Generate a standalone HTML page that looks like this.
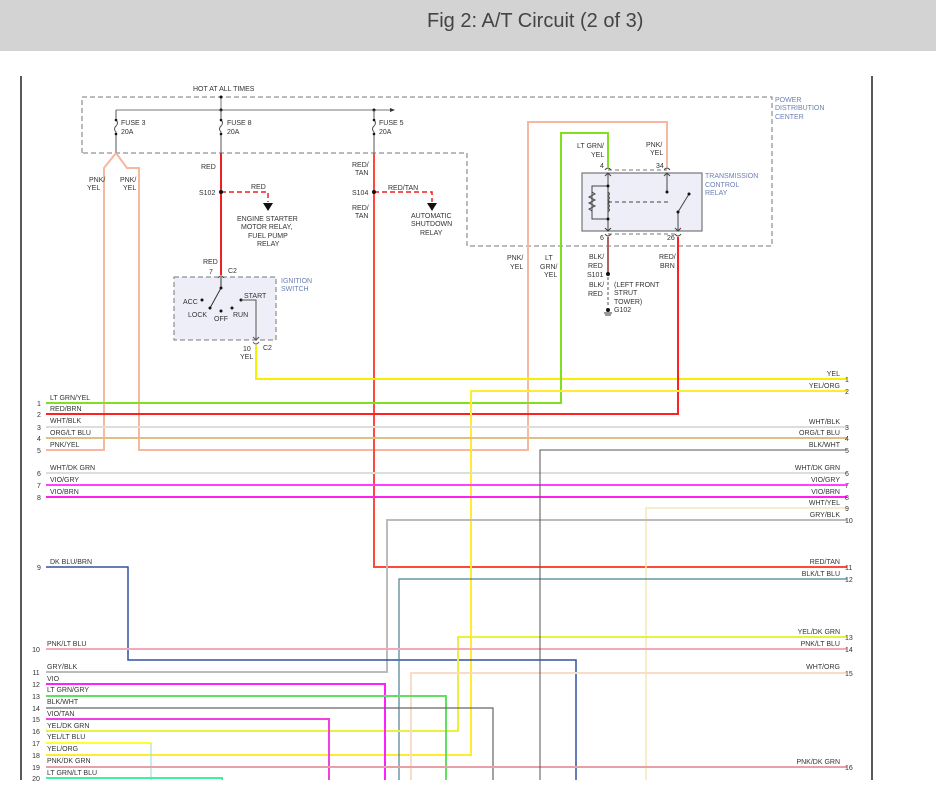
<!DOCTYPE html>
<html><head><meta charset="utf-8"><style>
html,body{margin:0;padding:0;background:#fff;width:936px;height:806px;overflow:hidden}
.hdr{position:absolute;left:0;top:0;width:936px;height:51px;background:#d3d3d3}
.hdr span{position:absolute;left:427px;top:10px;font:20px "Liberation Sans",sans-serif;color:#444}
svg{position:absolute;left:0;top:0}
text{font-family:"Liberation Sans",sans-serif;font-size:7px;fill:#333}
.b{fill:#6a7fb5}
</style></head><body>
<div class="hdr"><span>Fig 2: A/T Circuit (2 of 3)</span></div>
<svg width="936" height="806" viewBox="0 0 936 806">
<line x1="21" y1="76" x2="21" y2="780" stroke="#222" stroke-width="1.5"/>
<line x1="872" y1="76" x2="872" y2="780" stroke="#222" stroke-width="1.5"/>
<path d="M82,153 V97 H772 V246 H467 V153 H82" fill="none" stroke="#777" stroke-width="1" stroke-dasharray="5,3"/>
<text x="193" y="91">HOT AT ALL TIMES</text>
<text class="b" x="775" y="102">POWER</text><text class="b" x="775" y="110">DISTRIBUTION</text><text class="b" x="775" y="119">CENTER</text>
<line x1="221" y1="97" x2="221" y2="110" stroke="#777"/>
<line x1="116" y1="110" x2="390" y2="110" stroke="#777"/>
<path d="M390,108 L395,110 L390,112Z" fill="#333"/>
<g fill="#111"><circle cx="221" cy="97" r="1.5"/><circle cx="221" cy="110" r="1.5"/><circle cx="374" cy="110" r="1.5"/></g>
<g stroke="#555" fill="none">
<path d="M116,110 V120 q3,3 0,6 q-3,3 0,6 V153"/>
<path d="M221,110 V120 q3,3 0,6 q-3,3 0,6 V153"/>
<path d="M374,110 V120 q3,3 0,6 q-3,3 0,6 V153"/>
</g>
<g fill="#111"><circle cx="116" cy="120" r="1.3"/><circle cx="116" cy="134" r="1.3"/><circle cx="221" cy="120" r="1.3"/><circle cx="221" cy="134" r="1.3"/><circle cx="374" cy="120" r="1.3"/><circle cx="374" cy="134" r="1.3"/></g>
<text x="121" y="125">FUSE 3</text><text x="121" y="134">20A</text>
<text x="227" y="125">FUSE 8</text><text x="227" y="134">20A</text>
<text x="379" y="125">FUSE 5</text><text x="379" y="134">20A</text>
<g fill="none" stroke-width="2">
<path d="M116,153 L104,168 V450 H46" stroke="#f8b8a0"/>
<path d="M116,153 L127,168 H139 V450 H528 V122 H667 V167" stroke="#f8b8a0"/>
<path d="M221,153 V275" stroke="#ee2020"/>
<path d="M374,153 V567 H847" stroke="#ff4a3a"/>
<path d="M256,345 V379 H847" stroke="#f4f000"/>
<path d="M608,167 V133 H561 V403 H46" stroke="#80e020"/>
<path d="M678,237 V414 H46" stroke="#ff2020"/>
<path d="M608,237 V274" stroke="#b06060"/>
<path d="M847,391 H471 V755 H46" stroke="#ffec30"/>
<path d="M46,427 H847" stroke="#dddddd"/>
<path d="M46,438 H847" stroke="#e0c080"/>
<path d="M46,473 H847" stroke="#d8e0d8"/>
<path d="M46,485 H847" stroke="#ff40ff"/>
<path d="M46,497 H847" stroke="#ff20f0"/>
<path d="M847,508 H646 V780" stroke="#f0e8b8" stroke-width="1.5"/>
<path d="M847,520 H387 V672 H46" stroke="#bbbbbb"/>
<path d="M46,567 H128 V660 H576 V780" stroke="#3050a0" stroke-width="1.5"/>
<path d="M847,579 H399 V780" stroke="#4a8090" stroke-width="1.2"/>
<path d="M847,637 H458 V731 H46" stroke="#e8f040"/>
<path d="M46,649 H847" stroke="#f4a8b8"/>
<path d="M847,673 H411 V780" stroke="#f8dcc8"/>
<path d="M46,684 H385 V780" stroke="#ff20ff"/>
<path d="M46,696 H446 V780" stroke="#60e060"/>
<path d="M46,708 H493 V780" stroke="#666" stroke-width="1.2"/>
<path d="M46,719 H329 V780" stroke="#f040e0"/>
<path d="M46,743 H151" stroke="#ffff30"/>
<path d="M151,743 V780" stroke="#a0e0e0" stroke-width="1.2"/>
<path d="M46,767 H847" stroke="#e8a0a8"/>
<path d="M46,778 H222 V780" stroke="#40f0a0"/>
<path d="M847,450 H540 V780" stroke="#555" stroke-width="1"/>
</g>
<g fill="none" stroke="#ee2020" stroke-width="1.5" stroke-dasharray="5,3">
<path d="M221,192 H268 V202"/><path d="M374,192 H432 V202"/>
</g>
<path d="M263,203 H273 L268,211Z" fill="#111"/><path d="M427,203 H437 L432,211Z" fill="#111"/>
<g fill="#111"><circle cx="221" cy="192" r="2"/><circle cx="374" cy="192" r="2"/><circle cx="608" cy="274" r="2"/></g>
<text x="201" y="169">RED</text><text x="199" y="195">S102</text><text x="251" y="189">RED</text>
<text x="237" y="221">ENGINE STARTER</text><text x="241" y="229">MOTOR RELAY,</text><text x="248" y="238">FUEL PUMP</text><text x="257" y="246">RELAY</text>
<text x="352" y="167">RED/</text><text x="355" y="175">TAN</text><text x="352" y="195">S104</text><text x="388" y="190">RED/TAN</text>
<text x="352" y="210">RED/</text><text x="355" y="218">TAN</text>
<text x="411" y="218">AUTOMATIC</text><text x="411" y="226">SHUTDOWN</text><text x="420" y="235">RELAY</text>
<text x="89" y="182">PNK/</text><text x="87" y="190">YEL</text><text x="120" y="182">PNK/</text><text x="123" y="190">YEL</text>
<rect x="174" y="277" width="102" height="63" fill="#eeeef8" stroke="#777" stroke-dasharray="5,3"/>
<text x="203" y="264">RED</text><text x="209" y="274">7</text><text x="228" y="273">C2</text>
<text class="b" x="281" y="283">IGNITION</text><text class="b" x="281" y="291">SWITCH</text>
<path d="M218,278 q3,-4 6,0" fill="none" stroke="#555"/>
<path d="M221,277 V288 L210,308" stroke="#333" fill="none"/>
<g fill="#111"><circle cx="221" cy="288" r="1.5"/><circle cx="202" cy="300" r="1.5"/><circle cx="210" cy="308" r="1.5"/><circle cx="221" cy="311" r="1.5"/><circle cx="232" cy="308" r="1.5"/><circle cx="241" cy="300" r="1.5"/></g>
<path d="M241,300 H256 V340" stroke="#555" fill="none"/>
<path d="M253,337 L256,340 L259,337" stroke="#555" fill="none"/>
<path d="M253,342 q3,4 6,0" fill="none" stroke="#555"/>
<text x="183" y="304">ACC</text><text x="188" y="317">LOCK</text><text x="214" y="321">OFF</text><text x="233" y="317">RUN</text><text x="244" y="298">START</text>
<text x="243" y="351">10</text><text x="263" y="350">C2</text><text x="240" y="359">YEL</text>
<path d="M608,170 H667" stroke="#777" stroke-dasharray="4,3"/>
<path d="M608,234 H678" stroke="#777" stroke-dasharray="4,3"/>
<rect x="582" y="173" width="120" height="58" fill="#eeeef8" stroke="#777" stroke-width="1.2"/>
<g fill="none" stroke="#444">
<path d="M608,173 V231"/><path d="M605,176 L608,173 L611,176"/><path d="M605,228 L608,231 L611,228"/>
<path d="M608,186 H592 V219 H608"/>
<path d="M592,192 l3,2 -6,3 6,3 -6,3 6,3 -6,3 3,2"/>
<path d="M608,192 q3,2 0,4 q3,2 0,4 q3,2 0,4 q3,2 0,4 q3,2 0,4"/>
<path d="M608,202 H670" stroke-dasharray="4,3"/>
<path d="M667,173 V192"/><path d="M664,176 L667,173 L670,176"/>
<path d="M678,231 V212 L689,194"/><path d="M675,228 L678,231 L681,228"/>
<path d="M605,170 q3,-4 6,0 M664,170 q3,-4 6,0 M605,234 q3,4 6,0 M675,234 q3,4 6,0"/>
</g>
<g fill="#111"><circle cx="608" cy="186" r="1.5"/><circle cx="608" cy="219" r="1.5"/><circle cx="667" cy="192" r="1.5"/><circle cx="678" cy="212" r="1.5"/><circle cx="689" cy="194" r="1.5"/></g>
<text x="600" y="168">4</text><text x="656" y="168">34</text><text x="600" y="240">6</text><text x="667" y="240">26</text>
<text class="b" x="705" y="178">TRANSMISSION</text><text class="b" x="705" y="187">CONTROL</text><text class="b" x="705" y="195">RELAY</text>
<text x="577" y="148">LT GRN/</text><text x="591" y="157">YEL</text><text x="646" y="147">PNK/</text><text x="650" y="155">YEL</text>
<path d="M608,277 V307" stroke="#555" stroke-dasharray="3,2"/>
<circle cx="608" cy="310" r="2" fill="#111"/>
<path d="M604,313 H612 M605,315 H611" stroke="#333"/>
<text x="589" y="259">BLK/</text><text x="588" y="268">RED</text><text x="587" y="277">S101</text><text x="589" y="287">BLK/</text><text x="588" y="296">RED</text>
<text x="614" y="287">(LEFT FRONT</text><text x="614" y="295">STRUT</text><text x="614" y="304">TOWER)</text><text x="614" y="312">G102</text>
<text x="659" y="259">RED/</text><text x="660" y="268">BRN</text>
<text x="507" y="260">PNK/</text><text x="510" y="269">YEL</text>
<text x="545" y="260">LT</text><text x="540" y="269">GRN/</text><text x="544" y="277">YEL</text>
<g text-anchor="middle">
<text x="39" y="406">1</text><text x="39" y="417">2</text><text x="39" y="430">3</text><text x="39" y="441">4</text><text x="39" y="453">5</text><text x="39" y="476">6</text><text x="39" y="488">7</text><text x="39" y="500">8</text><text x="39" y="570">9</text><text x="36" y="652">10</text><text x="36" y="675">11</text><text x="36" y="687">12</text><text x="36" y="699">13</text><text x="36" y="711">14</text><text x="36" y="722">15</text><text x="36" y="734">16</text><text x="36" y="746">17</text><text x="36" y="758">18</text><text x="36" y="770">19</text><text x="36" y="781">20</text>
</g>
<g>
<text x="50" y="400">LT GRN/YEL</text><text x="50" y="411">RED/BRN</text><text x="50" y="423">WHT/BLK</text><text x="50" y="435">ORG/LT BLU</text><text x="50" y="447">PNK/YEL</text><text x="50" y="470">WHT/DK GRN</text><text x="50" y="482">VIO/GRY</text><text x="50" y="494">VIO/BRN</text><text x="50" y="564">DK BLU/BRN</text><text x="47" y="646">PNK/LT BLU</text><text x="47" y="669">GRY/BLK</text><text x="47" y="681">VIO</text><text x="47" y="692">LT GRN/GRY</text><text x="47" y="704">BLK/WHT</text><text x="47" y="716">VIO/TAN</text><text x="47" y="728">YEL/DK GRN</text><text x="47" y="739">YEL/LT BLU</text><text x="47" y="751">YEL/ORG</text><text x="47" y="763">PNK/DK GRN</text><text x="47" y="775">LT GRN/LT BLU</text>
</g>
<g text-anchor="end">
<text x="840" y="376">YEL</text><text x="840" y="388">YEL/ORG</text><text x="840" y="424">WHT/BLK</text><text x="840" y="435">ORG/LT BLU</text><text x="840" y="447">BLK/WHT</text><text x="840" y="470">WHT/DK GRN</text><text x="840" y="482">VIO/GRY</text><text x="840" y="494">VIO/BRN</text><text x="840" y="505">WHT/YEL</text><text x="840" y="517">GRY/BLK</text><text x="840" y="564">RED/TAN</text><text x="840" y="576">BLK/LT BLU</text><text x="840" y="634">YEL/DK GRN</text><text x="840" y="646">PNK/LT BLU</text><text x="840" y="669">WHT/ORG</text><text x="840" y="764">PNK/DK GRN</text>
</g>
<g>
<text x="845" y="382">1</text><text x="845" y="394">2</text><text x="845" y="430">3</text><text x="845" y="441">4</text><text x="845" y="453">5</text><text x="845" y="476">6</text><text x="845" y="488">7</text><text x="845" y="500">8</text><text x="845" y="511">9</text><text x="845" y="523">10</text><text x="845" y="570">11</text><text x="845" y="582">12</text><text x="845" y="640">13</text><text x="845" y="652">14</text><text x="845" y="676">15</text><text x="845" y="770">16</text>
</g>
</svg>
</body></html>
